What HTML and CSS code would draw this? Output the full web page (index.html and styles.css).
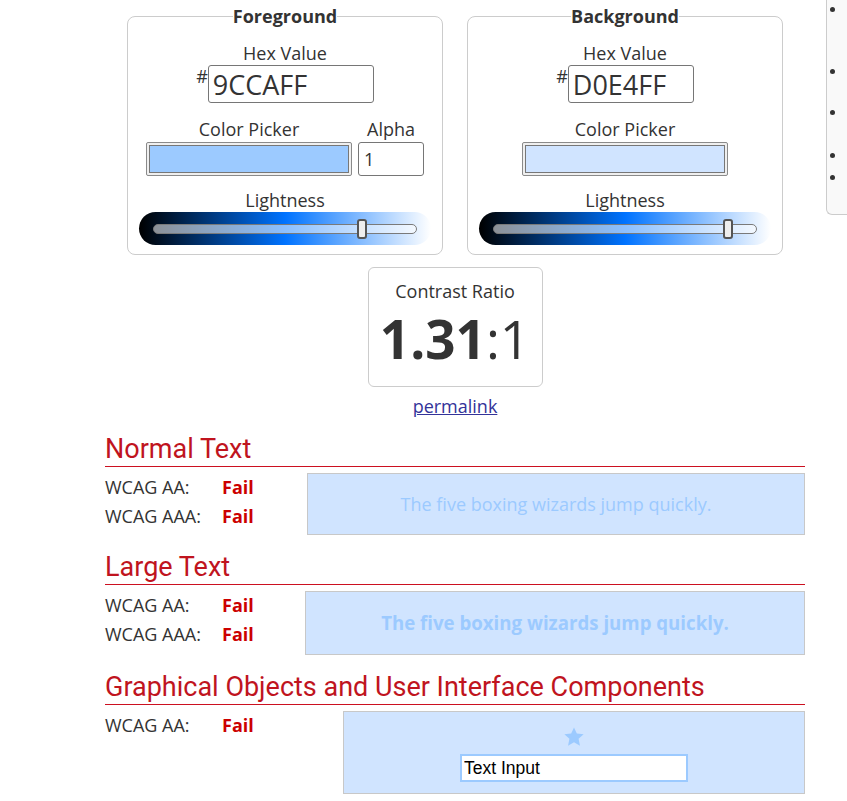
FILE: index.html
```html
<!DOCTYPE html>
<html lang="en">
<head>
<meta charset="utf-8">
<title>Contrast Checker</title>
<link rel="stylesheet" href="styles.css">
</head>
<body>
<div class="page">
  <main class="main">
    <div class="pickers">
      <fieldset class="picker">
        <legend>Foreground</legend>
        <div class="field-label first">Hex Value</div>
        <div class="hex-row">
          <span class="hash">#</span>
          <input class="hex-input hex-fg" type="text" value="9CCAFF" aria-label="Foreground hex value">
        </div>
        <div class="picker-row">
          <div class="col">
            <div class="field-label">Color Picker</div>
            <input class="color-input" type="color" value="#9ccaff" aria-label="Foreground color picker">
          </div>
          <div class="col">
            <div class="field-label">Alpha</div>
            <input class="alpha-input" type="text" value="1" aria-label="Alpha">
          </div>
        </div>
        <div class="field-label light-label">Lightness</div>
        <div class="lightness">
          <input class="range" type="range" min="0" max="100" step="0.1" value="80.6" aria-label="Foreground lightness">
        </div>
      </fieldset>
      <fieldset class="picker">
        <legend>Background</legend>
        <div class="field-label first">Hex Value</div>
        <div class="hex-row">
          <span class="hash">#</span>
          <input class="hex-input hex-bg" type="text" value="D0E4FF" aria-label="Background hex value">
        </div>
        <div class="picker-row">
          <div class="col">
            <div class="field-label">Color Picker</div>
            <input class="color-input" type="color" value="#d0e4ff" aria-label="Background color picker">
          </div>
        </div>
        <div class="field-label light-label">Lightness</div>
        <div class="lightness">
          <input class="range" type="range" min="0" max="100" step="0.1" value="90.8" aria-label="Background lightness">
        </div>
      </fieldset>
    </div>

    <div class="ratio-box">
      <div class="ratio-label">Contrast Ratio</div>
      <div class="ratio"><b>1.31</b>:1</div>
    </div>
    <div class="permalink"><a href="#">permalink</a></div>

    <h2 class="section-title">Normal Text</h2>
    <div class="result-row">
      <div class="results results-normal">
        <span>WCAG AA:</span><span class="fail">Fail</span>
        <span>WCAG AAA:</span><span class="fail">Fail</span>
      </div>
      <div class="sample sample-normal">The five boxing wizards jump quickly.</div>
    </div>

    <h2 class="section-title">Large Text</h2>
    <div class="result-row">
      <div class="results results-large">
        <span>WCAG AA:</span><span class="fail">Fail</span>
        <span>WCAG AAA:</span><span class="fail">Fail</span>
      </div>
      <div class="sample sample-large">The five boxing wizards jump quickly.</div>
    </div>

    <h2 class="section-title">Graphical Objects and User Interface Components</h2>
    <div class="result-row">
      <div class="results results-ui">
        <span>WCAG AA:</span><span class="fail">Fail</span>
      </div>
      <div class="sample sample-ui">
        <svg class="star" width="22" height="22" viewBox="0 0 24 24" aria-hidden="true"><polygon points="12,1.5 15.1,8.1 22.5,9 17,14 18.5,21.5 12,17.8 5.5,21.5 7,14 1.5,9 8.9,8.1"/></svg>
        <input class="text-input" type="text" value="Text Input" aria-label="Text Input">
      </div>
    </div>
  </main>

  <aside class="sidebar" aria-label="Sample color pairs">
    <ul class="side-list">
      <li><a class="chip c-red" href="#" aria-label="Red sample"></a><a class="chip c-purple" href="#" aria-label="Purple sample"></a><a class="chip c-blue" href="#" aria-label="Blue sample"></a></li>
      <li><a class="chip c-purple" href="#" aria-label="Violet sample"></a><a class="chip c-yellow" href="#" aria-label="Yellow sample"></a></li>
      <li><a class="chip c-purple" href="#" aria-label="Magenta sample"></a><a class="chip c-yellow" href="#" aria-label="Yellow sample"></a></li>
      <li class="single"><a class="chip c-yellow" href="#" aria-label="Yellow sample"></a></li>
      <li><a class="chip c-red" href="#" aria-label="Pink sample"></a><a class="chip c-yellow" href="#" aria-label="Yellow sample"></a></li>
    </ul>
  </aside>
</div>
</body>
</html>
```

FILE: styles.css
```css
html, body {
  overflow: hidden;
}

body {
  margin: 0;
  font-family: "Open Sans", "Liberation Sans", sans-serif;
  font-size: 18px;
  color: #333;
  background: #fff;
}

.page {
  display: flex;
  align-items: flex-start;
}

.main {
  flex: none;
  width: 700px;
  margin-left: 105px;
  padding-top: 5px;
}

/* ---------- color pickers ---------- */
.pickers {
  display: flex;
  justify-content: center;
  gap: 24px;
}

.picker {
  box-sizing: border-box;
  width: 316px;
  margin: 0;
  padding: 0 0 9px;
  border: 1px solid #ccc;
  border-radius: 8px;
  min-width: 0;
  text-align: center;
}

.picker legend {
  margin: 0 auto;
  padding: 0;
  font-weight: 700;
  line-height: 22px;
}

.field-label {
  line-height: 22px;
  text-align: center;
}

.field-label.first {
  margin-top: 15px;
}

.hex-row {
  display: flex;
  justify-content: center;
  align-items: flex-start;
  margin-top: 1px;
}

.hash {
  line-height: 22px;
}

.hex-input {
  box-sizing: border-box;
  height: 38px;
  margin: 0;
  padding: 0 4px;
  border: 1px solid #767676;
  border-radius: 3px;
  font-family: "Open Sans", sans-serif;
  font-size: 27px;
  color: #333;
  background: #fff;
}

.hex-fg { width: 166px; }
.hex-bg { width: 126px; }

.picker-row {
  display: flex;
  justify-content: center;
  gap: 6px;
  margin-top: 15px;
}

.col {
  display: flex;
  flex-direction: column;
  align-items: center;
}

.color-input {
  -webkit-appearance: none;
  appearance: none;
  box-sizing: border-box;
  width: 206px;
  height: 34px;
  margin: 2px 0 0;
  padding: 0;
  border: 1px solid #8a8a8a;
  border-radius: 2px;
  background: #efefef;
}

.color-input::-webkit-color-swatch-wrapper {
  padding: 2px;
}

.color-input::-webkit-color-swatch {
  border: 1px solid #777;
  border-radius: 0;
}

.alpha-input {
  box-sizing: border-box;
  width: 66px;
  height: 34px;
  margin: 2px 0 0;
  padding: 0 5px;
  border: 1px solid #767676;
  border-radius: 3px;
  font-family: "Open Sans", sans-serif;
  font-size: 18px;
  color: #333;
  background: #fff;
}

.light-label {
  margin-top: 13px;
}

.lightness {
  width: 292px;
  height: 33px;
  margin: 1px auto 0;
  border-radius: 17px;
  display: flex;
  align-items: center;
  justify-content: center;
  background: linear-gradient(to right, hsl(213, 100%, 0%) 0%, hsl(213, 100%, 50%) 50%, hsl(213, 100%, 100%) 100%);
}

.range {
  -webkit-appearance: none;
  appearance: none;
  width: 264px;
  height: 20px;
  margin: 0;
  background: transparent;
}

.range::-webkit-slider-runnable-track {
  box-sizing: border-box;
  height: 10px;
  border: 1px solid #7a7a7a;
  border-radius: 5px;
  background: rgba(255, 255, 255, 0.55);
}

.range::-webkit-slider-thumb {
  -webkit-appearance: none;
  appearance: none;
  box-sizing: border-box;
  width: 10px;
  height: 20px;
  margin-top: -6px;
  border: 2px solid #555;
  border-radius: 3px;
  background: #eee;
}

/* ---------- ratio ---------- */
.ratio-box {
  box-sizing: border-box;
  width: 175px;
  margin: 12px auto 0;
  padding: 12px 0 12px;
  border: 1px solid #ccc;
  border-radius: 6px;
  text-align: center;
}

.ratio-label {
  line-height: 22px;
}

.ratio {
  margin-top: 2px;
  font-size: 53px;
  line-height: 70px;
  color: #333;
}

.ratio b {
  font-weight: 700;
}

.permalink {
  margin-top: 8px;
  margin-bottom: 1px;
  line-height: 22px;
  text-align: center;
}

.permalink a {
  color: #333399;
}

/* ---------- sections ---------- */
.section-title {
  margin: 17px 0 0;
  padding-bottom: 2px;
  border-bottom: 1px solid #cc1020;
  font-family: Roboto, "Liberation Sans", sans-serif;
  font-weight: 400;
  font-size: 27px;
  line-height: 30px;
  color: #c0141e;
}

.result-row {
  display: flex;
  align-items: flex-start;
  margin-top: 6px;
}

.results {
  flex: none;
  display: grid;
  grid-template-columns: 117px auto;
  align-content: start;
  line-height: 29px;
}

.results-normal { width: 202px; }
.results-large { width: 200px; }
.results-ui { width: 238px; }

.fail {
  font-weight: 700;
  color: #c00;
}

.sample {
  flex: 1;
  box-sizing: border-box;
  border: 1px solid #c8c8c8;
  background: #d0e4ff;
  color: #9ccaff;
  text-align: center;
}

.sample-normal {
  height: 62px;
  line-height: 60px;
  font-size: 18px;
}

.sample-large {
  height: 64px;
  line-height: 62px;
  font-size: 18.66px;
  font-weight: 700;
}

.sample-ui {
  height: 83px;
  padding-top: 14px;
  display: flex;
  flex-direction: column;
  align-items: center;
}

.star {
  display: block;
  fill: #9ccaff;
}

.text-input {
  box-sizing: border-box;
  width: 228px;
  height: 28px;
  margin: 6px 0 0;
  padding: 0 2px;
  border: 2px solid #9ccaff;
  border-radius: 0;
  font-family: "Liberation Sans", Arial, sans-serif;
  font-size: 17.5px;
  color: #000;
  background: #fff;
  outline: none;
}

/* ---------- sidebar ---------- */
.sidebar {
  flex: none;
  box-sizing: border-box;
  width: 120px;
  height: 215px;
  margin-left: 21px;
  border-left: 1px solid #ccc;
  border-bottom: 1px solid #ccc;
  border-bottom-left-radius: 6px;
  background: #f9f9f9;
}

.side-list {
  margin: 0;
  padding: 0 0 0 20px;
  line-height: 20.5px;
  font-size: 14px;
  color: #333;
}

.side-list li.single {
  margin-top: 2px;
  margin-bottom: 2px;
}

.chip {
  display: block;
  width: 60px;
  height: 20.5px;
  box-sizing: border-box;
  border-bottom: 1px solid #2a2aa5;
  background: linear-gradient(to bottom, transparent 4px, var(--chip) 4px, var(--chip) 16px, transparent 16px);
}

.c-red { --chip: #f4a0a8; }
.c-purple { --chip: #b070c0; }
.c-blue { --chip: #c8c8f0; }
.c-yellow { --chip: #fff6b0; }
```
